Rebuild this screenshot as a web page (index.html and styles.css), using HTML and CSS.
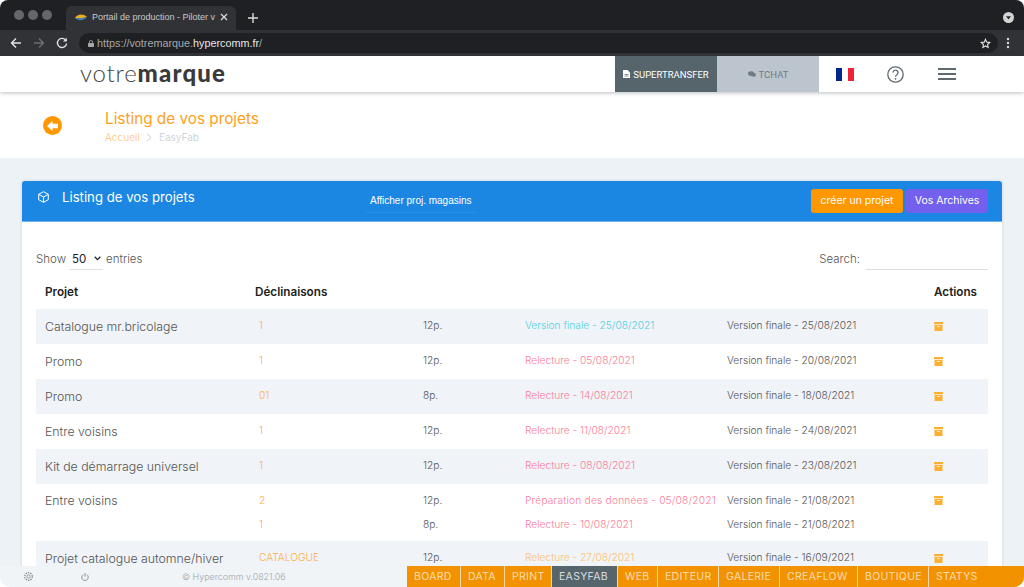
FILE: index.html
```html
<!DOCTYPE html>
<html lang="fr">
<head>
	<meta charset="utf-8">
	<title>Portail de production</title>
	<link rel="stylesheet" href="styles.css">
</head>
<body>

<div class="chrome">
	<div class="tabbar">
		<div class="lights"><i></i><i></i><i></i></div>
		<div class="tab">
			<svg class="favicon" width="14" height="8" viewBox="0 0 14 8"><path d="M1 5C3 1 9 0 13 4L9 5Z" fill="#e8b021"/><path d="M1 5L9 5 13 4C10 8 4 8 1 5Z" fill="#3f7fb5"/></svg>
			<span class="tab-title">Portail de production - Piloter v</span>
			<svg width="8" height="8" viewBox="0 0 8 8"><path d="M1 1L7 7M7 1L1 7" stroke="#dcdcdc" stroke-width="1.3"/></svg>
		</div>
		<svg class="newtab" width="10" height="10" viewBox="0 0 10 10"><path d="M5 0V10M0 5H10" stroke="#dcdcdc" stroke-width="1.4"/></svg>
		<svg class="profile" width="11" height="11" viewBox="0 0 11 11"><circle cx="5.5" cy="5.5" r="5.5" fill="#d4d4d4"/><path d="M3 4.3H8L5.5 7.6Z" fill="#26272a"/></svg>
	</div>
	<div class="toolbar">
		<svg width="12" height="12" viewBox="0 0 12 12"><path d="M11 6H2M6 1.5L1.5 6 6 10.5" fill="none" stroke="#e4e4e4" stroke-width="1.4"/></svg>
		<svg width="12" height="12" viewBox="0 0 12 12"><path d="M1 6H10M6 1.5L10.5 6 6 10.5" fill="none" stroke="#6d6e71" stroke-width="1.4"/></svg>
		<svg width="12" height="12" viewBox="0 0 12 12"><path d="M10 3.6A4.6 4.6 0 1 0 10.6 6.5" fill="none" stroke="#e4e4e4" stroke-width="1.4"/><path d="M10.8 0.8V4.6H7Z" fill="#e4e4e4"/></svg>
		<div class="urlbar">
			<svg width="6" height="7" viewBox="0 0 7 8"><path d="M1.6 3.5V2.4a1.9 1.9 0 0 1 3.8 0V3.5" fill="none" stroke="#a8a8a8"/><rect y="3.3" width="7" height="4.7" rx="0.8" fill="#a8a8a8"/></svg>
			<span class="url">https://votremarque.<b>hypercomm.fr</b>/</span>
			<svg class="star" width="11" height="11" viewBox="0 0 24 24"><path d="M12 3l2.8 6 6.5.8-4.8 4.4 1.3 6.4L12 17.4l-5.8 3.2 1.3-6.4L2.700 9.800 9.200 9Z" fill="none" stroke="#e4e4e4" stroke-width="2.400"/></svg>
		</div>
		<svg class="dots" width="4" height="12" viewBox="0 0 4 12"><circle cx="2" cy="2" r="1.200" fill="#dcdcdc"/><circle cx="2" cy="6" r="1.200" fill="#dcdcdc"/><circle cx="2" cy="10" r="1.200" fill="#dcdcdc"/></svg>
	</div>
</div>

<header class="topbar">
	<div class="logo">votre<b>marque</b></div>
	<div class="top-right">
		<a class="top-btn transfer">
			<svg width="7" height="8" viewBox="0 0 7 8"><path d="M0 0H4.500L7 2.500V8H0Z" fill="#fff"/><path d="M1.500 4.500H5.500M1.500 6H5.500" stroke="#56646b" stroke-width="0.700"/></svg>
			SUPERTRANSFER
		</a>
		<a class="top-btn tchat">
			<svg width="8" height="6" viewBox="0 0 8 6"><ellipse cx="3" cy="2.500" rx="3" ry="2.300" fill="#6f7c84"/><ellipse cx="5.500" cy="3.700" rx="2.500" ry="2" fill="#6f7c84"/></svg>
			TCHAT
		</a>
		<div class="flag"><i class="blue"></i><i class="white"></i><i class="red"></i></div>
		<svg class="help" width="17" height="17" viewBox="0 0 17 17"><circle cx="8.500" cy="8.500" r="7.700" fill="none" stroke="#5f6a70" stroke-width="1.300"/><path d="M6 6.600a2.500 2.500 0 1 1 3.900 2.100c-.9.600-1.400 1-1.400 2" fill="none" stroke="#5f6a70" stroke-width="1.300"/><circle cx="8.500" cy="12.800" r=".9" fill="#5f6a70"/></svg>
		<div class="burger"><i></i><i></i><i></i></div>
	</div>
</header>

<section class="titleband">
	<a class="back">
		<svg width="11" height="10" viewBox="0 0 11 10"><path d="M5.500 0V2.800H11V7.200H5.500V10L0 5Z" fill="#fff"/></svg>
	</a>
	<div>
		<h1>Listing de vos projets</h1>
		<div class="crumbs"><span class="crumb-home">Accueil</span>
			<svg class="crumb-sep" width="6" height="9" viewBox="0 0 6 9"><path d="M1 .8L5 4.500 1 8.200" fill="none" stroke="#c4ccd2"/></svg>
			<span>EasyFab</span></div>
	</div>
</section>

<main class="content">
	<div class="card">
		<div class="card-head">
			<svg class="cube" width="11" height="12" viewBox="0 0 11 12"><path d="M5.500 .7L10.300 3.300V8.700L5.500 11.300 .7 8.700V3.300ZM.7 3.300L5.500 6 10.300 3.300M5.500 6V11.300" fill="none" stroke="#fff" stroke-width="1"/></svg>
			<h2>Listing de vos projets</h2>
			<a class="stores">Afficher proj. magasins</a>
			<a class="btn btn-orange">créer un projet</a>
			<a class="btn btn-purple">Vos Archives</a>
		</div>
		<div class="card-body">
			<div class="table-tools">
				<div class="length">Show
					<span class="select">50
						<svg width="7" height="5" viewBox="0 0 7 5"><path d="M.7 .8L3.500 3.600 6.300 .8" fill="none" stroke="#222" stroke-width="1.300"/></svg>
					</span>
					entries
				</div>
				<div class="search">Search:<span class="search-input"></span></div>
			</div>
			<table class="projects">
				<colgroup>
					<col class="c-name"><col class="c-decl"><col class="c-pages"><col class="c-status"><col class="c-final"><col class="c-act">
				</colgroup>
				<thead>
					<tr><th>Projet</th><th class="th-decl" colspan="4">Déclinaisons</th><th>Actions</th></tr>
				</thead>
				<tbody>
					<tr class="odd">
						<td class="name">Catalogue mr.bricolage</td><td class="decl">1</td><td>12p.</td><td class="cyan">Version finale - 25/08/2021</td><td>Version finale - 25/08/2021</td>
						<td><svg class="archive" viewBox="0 0 9 9"><use href="#box"/></svg></td>
					</tr>
					<tr>
						<td class="name">Promo</td><td class="decl">1</td><td>12p.</td><td class="pink">Relecture - 05/08/2021</td><td>Version finale - 20/08/2021</td>
						<td><svg class="archive" viewBox="0 0 9 9"><use href="#box"/></svg></td>
					</tr>
					<tr class="odd">
						<td class="name">Promo</td><td class="decl">01</td><td>8p.</td><td class="pink">Relecture - 14/08/2021</td><td>Version finale - 18/08/2021</td>
						<td><svg class="archive" viewBox="0 0 9 9"><use href="#box"/></svg></td>
					</tr>
					<tr>
						<td class="name">Entre voisins</td><td class="decl">1</td><td>12p.</td><td class="pink">Relecture - 11/08/2021</td><td>Version finale - 24/08/2021</td>
						<td><svg class="archive" viewBox="0 0 9 9"><use href="#box"/></svg></td>
					</tr>
					<tr class="odd">
						<td class="name">Kit de démarrage universel</td><td class="decl">1</td><td>12p.</td><td class="pink">Relecture - 08/08/2021</td><td>Version finale - 23/08/2021</td>
						<td><svg class="archive" viewBox="0 0 9 9"><use href="#box"/></svg></td>
					</tr>
					<tr class="split-top">
						<td class="name" rowspan="2">Entre voisins</td><td class="decl">2</td><td>12p.</td><td class="pink long">Préparation des données - 05/08/2021</td><td>Version finale - 21/08/2021</td>
						<td class="act" rowspan="2"><svg class="archive" viewBox="0 0 9 9"><use href="#box"/></svg></td>
					</tr>
					<tr class="split-bottom">
						<td class="decl">1</td><td>8p.</td><td class="pink">Relecture - 10/08/2021</td><td>Version finale - 21/08/2021</td>
					</tr>
					<tr class="odd">
						<td class="name">Projet catalogue automne/hiver</td><td class="decl">CATALOGUE</td><td>12p.</td><td class="amber">Relecture - 27/08/2021</td><td>Version finale - 16/09/2021</td>
						<td><svg class="archive" viewBox="0 0 9 9"><use href="#box"/></svg></td>
					</tr>
				</tbody>
			</table>
		</div>
	</div>
</main>

<footer class="footer">
	<div class="foot-left">
		<svg class="gear" width="11" height="11" viewBox="0 0 11 11"><circle cx="5.500" cy="5.500" r="1.700" fill="none" stroke="#7d8a92" stroke-width=".8"/><circle cx="5.500" cy="5.500" r="3.800" fill="none" stroke="#7d8a92" stroke-width="1.200" stroke-dasharray="1.500 .9"/></svg>
		<svg class="power" width="8" height="8" viewBox="0 0 8 8"><path d="M2.200 1.600a3.200 3.200 0 1 0 3.600 0M4 0V3.600" fill="none" stroke="#7d8a92" stroke-width=".9"/></svg>
		<span class="copy">© Hypercomm v.0821.06</span>
	</div>
	<nav class="modules">
		<a>BOARD</a><a>DATA</a><a>PRINT</a><a class="current">EASYFAB</a><a>WEB</a><a>EDITEUR</a><a>GALERIE</a><a>CREAFLOW</a><a>BOUTIQUE</a><a>STATYS</a>
	</nav>
</footer>

<svg class="defs" width="0" height="0">
	<symbol id="box" viewBox="0 0 9 9">
		<path d="M0 0H9V2.300H0ZM.5 3H8.500V9H.5Z" fill="#fdb02f"/>
		<path d="M3 4.500H6" stroke="#fff" stroke-width=".8"/>
	</symbol>
</svg>

</body>
</html>
```

FILE: styles.css
```css
* {box-sizing: border-box;}
html, body {height: 100%;}
body {margin: 0; height: 100vh; overflow: hidden; display: flex; flex-direction: column; background: #fff; font-family: "Inter", "Liberation Sans", sans-serif; font-weight: 300; color: #555;}
a {display: block;}
svg {display: block; flex: none;}
h1, h2 {margin: 0; font-weight: 400;}

/* browser frame */
.chrome {flex: none; height: 56px; background: #1f2023; border-radius: 8px 8px 0 0; font-family: "Liberation Sans", sans-serif; overflow: hidden;}
.tabbar {height: 30px; display: flex; align-items: flex-end; padding-left: 14px; position: relative;}
.lights {display: flex; gap: 4px; height: 25px; width: 52px; padding-top: 5px;}
.lights i {width: 10px; height: 10px; border-radius: 50%; background: #66676a;}
.tab {width: 170px; height: 24px; background: #313235; border-radius: 6px 6px 0 0; display: flex; align-items: center; padding: 0 8px 2px 8px; color: #c8c8c8; font-size: 9px;}
.favicon {margin-right: 4px;}
.tab-title {flex: 1; white-space: nowrap; overflow: hidden;}
.newtab {margin: 0 0 7px 12px;}
.profile {margin: 0 10px 7px auto;}
.toolbar {height: 26px; background: #313235; display: flex; align-items: center; padding: 0 14px 0 10px; gap: 11px;}
.urlbar {flex: 1; height: 20px; background: #1f2023; border-radius: 10px; display: flex; align-items: center; padding: 0 7px 0 9px; gap: 3px;}
.url {flex: 1; font-size: 10.8px; color: #a8a8a8;}
.url b {color: #e6e6e6; font-weight: 400;}
.dots {margin-left: -3px;}

/* top nav */
.topbar {flex: none; height: 36px; display: flex; justify-content: space-between; background: #fff; box-shadow: 0 1px 4px rgba(60, 70, 80, .35); position: relative; z-index: 2;}
.logo {margin-left: 80px; font-family: "Lato", sans-serif; font-size: 24px; line-height: 34px; color: #444; letter-spacing: .8px; font-weight: 300;}
.logo b {font-weight: 900; color: #3a3a3a; letter-spacing: 1.2px;}
.top-right {display: flex; align-items: center;}
.top-btn {width: 102px; height: 36px; display: flex; align-items: center; justify-content: center; gap: 3px; font-family: "Roboto", sans-serif; font-size: 9.5px; font-weight: 400;}
.transfer {background: #56646b; color: #fff;}
.tchat {background: #bcc5cd; color: #6f7c84;}
.flag {display: flex; width: 18px; height: 13px; margin: 0 33px 0 17px;}
.flag i {flex: 1;}
.flag .blue {background: #00268c;}
.flag .white {background: #fff;}
.flag .red {background: #ee2436;}
.burger {width: 18px; margin: 0 68px 0 34px; display: flex; flex-direction: column; gap: 3px;}
.burger i {height: 2px; background: #5f6a70;}

/* title band */
.titleband {flex: none; height: 66px; display: flex; background: #fff; padding: 16px 0 0 43px;}
.back {width: 19px; height: 19px; margin: 8px 43px 0 0; background: #ff9800; border-radius: 50%; display: flex; align-items: center; justify-content: center;}
h1 {font-size: 15.3px; line-height: 22px; color: #ff9f1c; font-weight: 400;}
.crumbs {display: flex; align-items: center; font-size: 10.2px; line-height: 15px; color: #c4ccd2;}
.crumb-home {color: #fdc57a;}
.crumb-sep {margin: 0 7px 0 6px;}

/* main */
.content {flex: 1; min-height: 0; overflow: hidden; background: #edf2f6; padding: 23px 22px 0;}
.card {background: #fff; border-radius: 3px 3px 0 0; box-shadow: 0 0 3px rgba(80, 110, 140, .25); height: 500px;}
.card-head {height: 41px; background: #1c86e3; border-bottom: 1px solid #6fb2ee; border-radius: 3px 3px 0 0; display: flex; align-items: center; padding: 0 14px 0 16px; color: #fff;}
.cube {margin: 0 0 8px 0;}
.card-head h2 {font-size: 13.2px; margin: 0 0 8px 13px; width: 171px;}
.stores {width: 110px; margin: 0 0 0 133px; font-family: "Liberation Sans", sans-serif; font-size: 10px; font-weight: 400; padding: 5px 0 6px 4px; white-space: nowrap; border-bottom: 1px solid #2a8fe8;}
.btn {height: 24px; border-radius: 3px; font-size: 10.5px; font-weight: 400; line-height: 24px; text-align: center;}
.btn-orange {width: 92px; background: #ff9800; margin-left: auto;}
.btn-purple {width: 82px; background: #7460ee; margin-left: 3px;}
.card-body {padding: 26px 14px 0;}
.table-tools {height: 22px; display: flex; justify-content: space-between; font-size: 11.5px; color: #555; margin-bottom: 12px;}
.length {display: flex; align-items: center; gap: 3px;}
.select {width: 34px; height: 21px; display: flex; align-items: center; justify-content: space-between; padding: 0 2px 0 3px; border-bottom: 1px solid #dde3e8; color: #222; font-weight: 400;}
.search {display: flex; align-items: center; gap: 6px;}
.search-input {display: block; width: 122px; height: 21px; border-bottom: 1px solid #d8dee3;}

/* table */
.projects {width: 952px; table-layout: fixed; border-collapse: collapse; font-size: 10.2px;}
.c-name {width: 214px;}
.c-decl {width: 164px;}
.c-pages {width: 102px;}
.c-status {width: 202px;}
.c-final {width: 207px;}
.c-act {width: 63px;}
.projects th {height: 27px; padding: 0 0 7px 9px; text-align: left; font-size: 11.7px; font-weight: 600; color: #222;}
.projects th.th-decl {padding-left: 5px;}
.projects td {height: 35px; padding: 0 0 4px 9px; white-space: nowrap; color: #555;}
.projects .odd td {background: #f0f3f7;}
.projects td.name {font-size: 12.3px; color: #555; padding-bottom: 0;}
.projects td.decl {color: #fcb04a;}
.projects td.pink {color: #fb7d9a;}
.projects td.long {letter-spacing: .2px;}
.projects td.cyan {color: #52cfe2;}
.projects td.amber {color: #fbc271;}
.projects .split-top td {height: 26px; padding-top: 10px; padding-bottom: 0; vertical-align: top;}
.projects .split-bottom td {height: 31px; padding-top: 8px; padding-bottom: 0; vertical-align: top;}
.projects .split-top td.name {padding-top: 9px;}
.projects .split-top td.act {padding-top: 8px;}
.archive {width: 9px; height: 9px; margin-top: 4px; fill: #fdb02f;}
.defs {position: absolute;}

/* footer */
.footer {flex: none; height: 21px; display: flex; background: #f1f4f7; border-radius: 0 0 10px 10px; overflow: hidden; position: relative; z-index: 2;}
.foot-left {width: 407px; display: flex; align-items: center; padding-left: 23px;}
.power {margin-left: 47px;}
.copy {margin-left: 93px; font-size: 8.9px; color: #9aa5ad;}
.modules {flex: 1; display: grid; grid-template-columns: 53px 43px 46px 65px 39px 60px 60px 77px 70px 1fr; gap: 1px; background: #f7d9a8;}
.modules a {background: #f39200; color: #fbdcae; font-size: 10.5px; font-weight: 400; line-height: 21px; padding-left: 7px; letter-spacing: .3px; white-space: nowrap;}
.modules a.current {background: #56646b; color: #d6dce0;}
```
